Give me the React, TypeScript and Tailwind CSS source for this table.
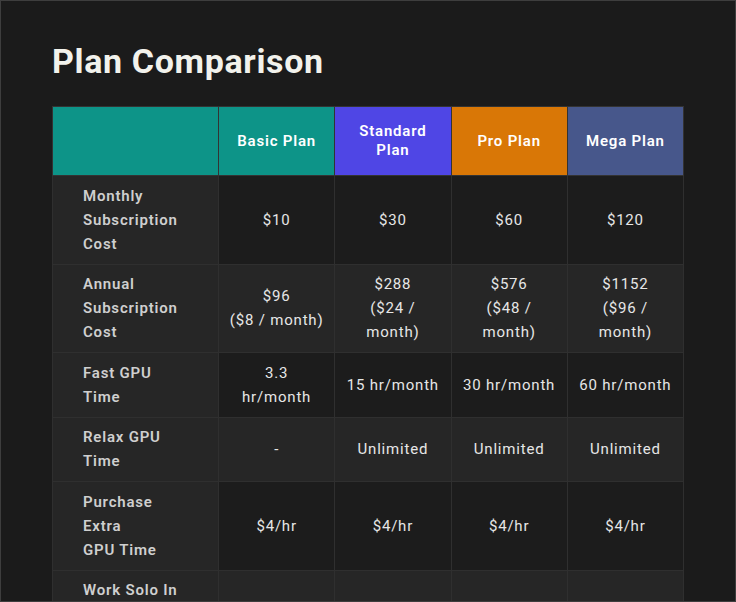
const plans = [
  { name: "Basic Plan", color: "bg-[#0d9488]" },
  { name: "Standard Plan", color: "bg-[#4f46e5]" },
  { name: "Pro Plan", color: "bg-[#d97706]" },
  { name: "Mega Plan", color: "bg-[#47578b]" },
];

// Labels and values are lists of lines; long lines may still wrap inside the cell
const rows: { label: string[]; values: string[][] }[] = [
  { label: ["Monthly Subscription Cost"], values: [["$10"], ["$30"], ["$60"], ["$120"]] },
  {
    label: ["Annual Subscription Cost"],
    values: [
      ["$96", "($8 / month)"],
      ["$288", "($24 / month)"],
      ["$576", "($48 / month)"],
      ["$1152", "($96 / month)"],
    ],
  },
  { label: ["Fast GPU Time"], values: [["3.3 hr/month"], ["15 hr/month"], ["30 hr/month"], ["60 hr/month"]] },
  { label: ["Relax GPU Time"], values: [["-"], ["Unlimited"], ["Unlimited"], ["Unlimited"]] },
  { label: ["Purchase Extra", "GPU Time"], values: [["$4/hr"], ["$4/hr"], ["$4/hr"], ["$4/hr"]] },
  { label: ["Work Solo In Your Direct Messages"], values: [["-"], ["✓"], ["✓"], ["✓"]] },
];

export default function App() {
  return (
    <div
      className="w-[736px] h-[602px] overflow-hidden border border-[#3e3e3e] bg-[#1b1b1b] px-[51px] pt-[38px]"
      style={{ fontFamily: "Roboto, 'Liberation Sans', sans-serif" }}
    >
      {/* TITLE */}
      <h1 className="text-[34px] leading-[44px] font-bold text-[#f2f2ec] tracking-[0.65px]">Plan Comparison</h1>

      {/* COMPARISON TABLE */}
      <table className="mt-[23px] w-[632px] table-fixed border-collapse text-[15px] tracking-[0.8px]">
        <colgroup>
          <col className="w-[166px]" />
          <col />
          <col />
          <col />
          <col />
        </colgroup>
        <thead>
          <tr className="h-[69px]">
            <th className="border border-[#333] bg-[#0d9488]"></th>
            {plans.map((plan) => (
              <th
                key={plan.name}
                className={`border border-[#333] ${plan.color} px-[12px] py-[15px] text-center font-semibold leading-[19px] text-white`}
              >
                {plan.name}
              </th>
            ))}
          </tr>
        </thead>
        <tbody>
          {rows.map((row, index) => (
            <tr key={row.label.join(" ")} className={index % 2 === 0 ? "bg-[#1c1c1c]" : "bg-[#262626]"}>
              <th className="border border-[#2f2f2f] bg-[#262626] py-[7.75px] pl-[30px] pr-[38px] text-left align-middle font-semibold leading-[24px] text-[#cfcfcf]">
                {row.label.map((line) => (
                  <div key={line}>{line}</div>
                ))}
              </th>
              {row.values.map((lines, valueIndex) => (
                <td
                  key={valueIndex}
                  className="border border-[#2f2f2f] px-[10px] py-[7.75px] text-center align-middle font-normal leading-[24px] text-[#e6e6e6]"
                >
                  {lines.map((line) => (
                    <div key={line}>{line}</div>
                  ))}
                </td>
              ))}
            </tr>
          ))}
        </tbody>
      </table>
    </div>
  );
}
